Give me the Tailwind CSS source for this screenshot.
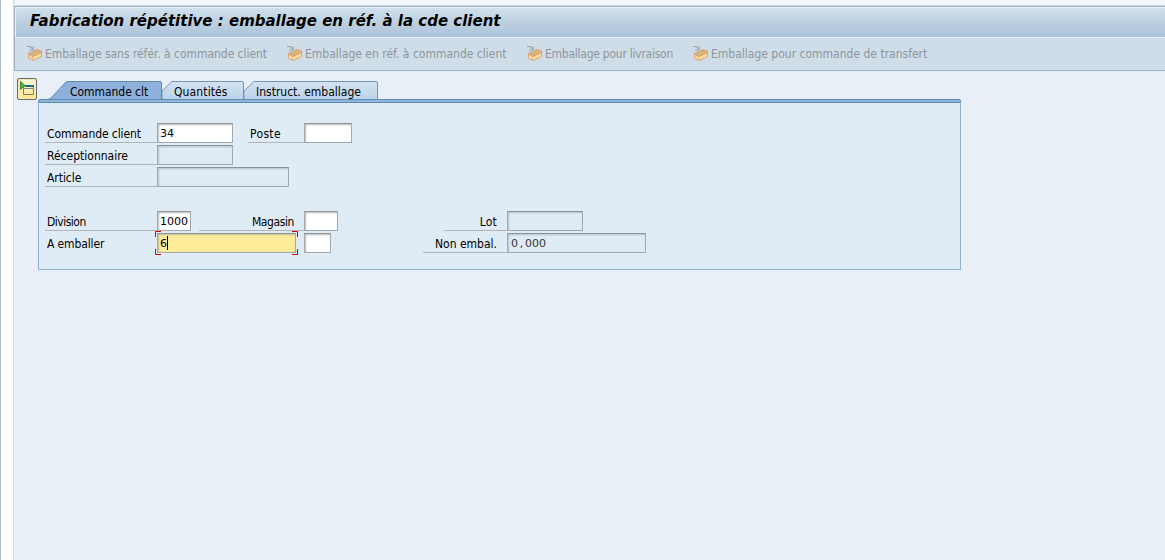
<!DOCTYPE html>
<html lang="fr">
<head>
<meta charset="utf-8">
<title>Fabrication répétitive</title>
<script src="https://cdn.jsdelivr.net/npm/@tailwindcss/browser@4"></script>
</head>
<body class="flex h-[560px] w-[1165px] overflow-hidden bg-white font-['DejaVu_Sans_Condensed','DejaVu_Sans',sans-serif] text-[12px] leading-[18px] text-black [font-stretch:condensed] whitespace-nowrap">
<svg class="hidden">
  <symbol id="box" viewBox="0 0 16 16">
    <path d="M1.500 7.500 5.500 10.500 14.500 6.500V10.500L6 14.500 1.500 12Z" fill="#f8df96" stroke="#df9f7c"/>
    <path d="M1.500 7.500 6 5.500 10 3.500 14.500 5V6.500L5.500 10.500Z" fill="#d3b87c" stroke="#df9f7c"/>
    <path d="M5.500 10.500V14" stroke="#e6b384" fill="none"/>
    <path d="M0 .500H3.500L5.500 3M2 4H6V.500" stroke="#9ba1a8" fill="none" stroke-width="1.2"/>
  </symbol>
</svg>
<div class="w-[14px] shrink-0 border-l border-r border-l-[#aab9cf] border-r-[#d5dde8] bg-white"></div>
<main class="flex min-w-0 flex-1 flex-col bg-[#e8eff7]">
  <div class="h-[6px] shrink-0 border-b border-[#cfd9e5] bg-[#f2f6fb]"></div>
  <header class="h-[65px] shrink-0 border-y border-l border-[#9fb1c6] bg-[#cfdde8]">
    <h1 class="flex h-[31px] items-center border-y border-l border-[#e6f0f8] bg-linear-to-b from-[#d0e0ed] via-[#bdd0e0] to-[#abc3dd] pb-[4px] pl-[14px] font-['DejaVu_Sans',sans-serif] text-[15px] font-bold italic [font-stretch:normal]">Fabrication répétitive : emballage en réf. à la cde client</h1>
    <nav class="flex h-[32px] items-center pl-[12px] text-[#8e959d]">
      <div class="flex w-[260px] items-center gap-[2px]"><svg class="size-[16px]"><use href="#box"/></svg><span class="tracking-[-0.04px]">Emballage sans référ. à commande client</span></div>
      <div class="flex w-[240px] items-center gap-[2px]"><svg class="size-[16px]"><use href="#box"/></svg><span>Emballage en réf. à commande client</span></div>
      <div class="flex w-[166px] items-center gap-[2px]"><svg class="size-[16px]"><use href="#box"/></svg><span class="tracking-[-0.25px]">Emballage pour livraison</span></div>
      <div class="flex items-center gap-[2px]"><svg class="size-[16px]"><use href="#box"/></svg><span>Emballage pour commande de transfert</span></div>
    </nav>
  </header>
  <div class="flex pl-[3px] pt-[7px]">
    <div class="h-[22px] w-[20px] rounded-[2px] border border-[#686b70] bg-linear-to-b from-[#fff8d6] to-[#fbe68e] shadow-[inset_0_0_0_1px_#f6e7a8]">
      <svg class="h-[20px] w-[18px]" viewBox="0 0 18 20" fill="none"><path d="M5.500 8V15.500H15.500V7" stroke="#8a7a55"/><path d="M7 7H16" stroke="#176a8c" stroke-width="2"/><path d="M5 9.500H16" stroke="#7f8d90"/><path d="M2.500 2.500V10.500L7 6.500Z" fill="#5cb531" stroke="#30862b"/></svg>
    </div>
    <div class="ml-px w-[923px]">
      <div class="relative h-[21px] pt-[3px]">
        <svg class="absolute left-0 top-[3px] h-[19px] w-[345px]" viewBox="0 0 345 19" fill="none">
          <defs><linearGradient id="tab" x2="0" y2="1"><stop stop-color="#d3e3f1"/><stop offset="1" stop-color="#bcd3ea"/></linearGradient></defs>
          <path d="M206 18.500V10L216 .5H338Q339.500 .5 339.500 2V18.500" fill="url(#tab)" stroke="#7595b0"/>
          <path d="M124 18.500V10L134 .5H204Q205.500 .5 205.500 2V18.500" fill="url(#tab)" stroke="#7595b0"/>
          <path d="M9 18.500Q12 18.500 14 16L27 2Q28 .5 30 .5H122Q123.500 .5 123.500 2V18.500" fill="#8db1db" stroke="#648bad"/>
        </svg>
        <div class="relative flex pl-[32px] pt-[2px]"><span class="w-[104px] tracking-[-0.05px]">Commande clt</span><span class="w-[82px] tracking-[0.12px]">Quantités</span><span>Instruct. emballage</span></div>
      </div>
      <div class="relative h-[4px] rounded-t-[2px] border border-[#5f8bb0] bg-[#91b6db]"></div>
      <section class="h-[167px] border border-t-0 border-[#8fb2d0] bg-[#dfebf5] pl-[6px] pt-[20px]">
        <div class="flex h-[22px]">
          <div class="h-[20px] w-[112px] border-b border-[#b1b5b8] pl-[2px] pt-[2px] tracking-[-0.08px]">Commande client</div>
          <div class="h-[20px] w-[76px] border border-[#a5a9ad] border-t-[#8e9397] bg-white pl-[2px] font-['DejaVu_Sans',sans-serif] text-[11px] leading-[20px] [font-stretch:normal] shadow-[inset_1px_1px_2px_#bbb]">34</div>
          <div class="ml-[15px] h-[20px] w-[56px] border-b border-[#b1b5b8] pl-[2px] pt-[2px] tracking-[0.35px]">Poste</div>
          <div class="h-[20px] w-[48px] border border-[#a5a9ad] border-t-[#8e9397] bg-white shadow-[inset_1px_1px_2px_#bbb]"></div>
        </div>
        <div class="flex h-[22px]">
          <div class="h-[20px] w-[112px] border-b border-[#b1b5b8] pl-[2px] pt-[2px]">Réceptionnaire</div>
          <div class="h-[20px] w-[76px] border border-[#a5a9ad] border-t-[#8e9397] shadow-[inset_1px_1px_2px_#b5bfc9]"></div>
        </div>
        <div class="flex h-[44px]">
          <div class="h-[20px] w-[112px] border-b border-[#b1b5b8] pl-[2px] pt-[2px] tracking-[-0.05px]">Article</div>
          <div class="h-[20px] w-[132px] border border-[#a5a9ad] border-t-[#8e9397] shadow-[inset_1px_1px_2px_#b5bfc9]"></div>
        </div>
        <div class="flex h-[22px]">
          <div class="h-[20px] w-[112px] border-b border-[#b1b5b8] pl-[2px] pt-[2px] tracking-[-0.5px]">Division</div>
          <div class="h-[20px] w-[34px] border border-[#a5a9ad] border-t-[#8e9397] bg-white pl-[2px] font-['DejaVu_Sans',sans-serif] text-[11px] leading-[20px] [font-stretch:normal] shadow-[inset_1px_1px_2px_#bbb]">1000</div>
          <div class="ml-[8px] h-[20px] w-[105px] border-b border-[#b1b5b8] pr-[10px] pt-[2px] text-right tracking-[-0.4px]">Magasin</div>
          <div class="h-[20px] w-[34px] border border-[#a5a9ad] border-t-[#8e9397] bg-white shadow-[inset_1px_1px_2px_#bbb]"></div>
          <div class="ml-[106px] h-[20px] w-[63px] border-b border-[#b1b5b8] pr-[10px] pt-[2px] text-right tracking-[0.2px]">Lot</div>
          <div class="h-[20px] w-[76px] border border-[#a5a9ad] border-t-[#8e9397] shadow-[inset_1px_1px_2px_#b5bfc9]"></div>
        </div>
        <div class="flex h-[22px]">
          <div class="h-[20px] w-[112px] pl-[2px] pt-[2px] tracking-[-0.12px]">A emballer</div>
          <div class="relative h-[20px] w-[139px] border border-[#a5a9ad] border-t-[#8e9397] bg-[#ffed9c] pl-[2px] font-['DejaVu_Sans',sans-serif] text-[11px] leading-[20px] [font-stretch:normal] shadow-[inset_1px_1px_2px_#c5bd90]">6<i class="absolute left-[9px] top-[2px] h-[14px] w-px bg-black"></i>
            <svg class="absolute -left-[3px] -top-[3px] h-[24px] w-[143px]" viewBox="0 0 143 24" fill="none" stroke="#d40000"><path d="M.5 6V.5H6M137 .5H142.500V6"/><path d="M.5 18V23.500H6M137 23.500H142.500V18"/></svg>
          </div>
          <div class="ml-[8px] h-[20px] w-[27px] border border-[#a5a9ad] border-t-[#8e9397] bg-white shadow-[inset_1px_1px_2px_#bbb]"></div>
          <div class="ml-[92px] h-[20px] w-[84px] border-b border-[#b1b5b8] pr-[10px] pt-[2px] text-right">Non embal.</div>
          <div class="h-[20px] w-[139px] border border-[#a5a9ad] border-t-[#8e9397] pl-[3px] font-['DejaVu_Sans',sans-serif] text-[11px] leading-[20px] [font-stretch:normal] text-[#333] shadow-[inset_1px_1px_2px_#b5bfc9]">0<span class="inline-block w-[7px] text-center">,</span>000</div>
        </div>
      </section>
    </div>
  </div>
</main>
</body>
</html>
